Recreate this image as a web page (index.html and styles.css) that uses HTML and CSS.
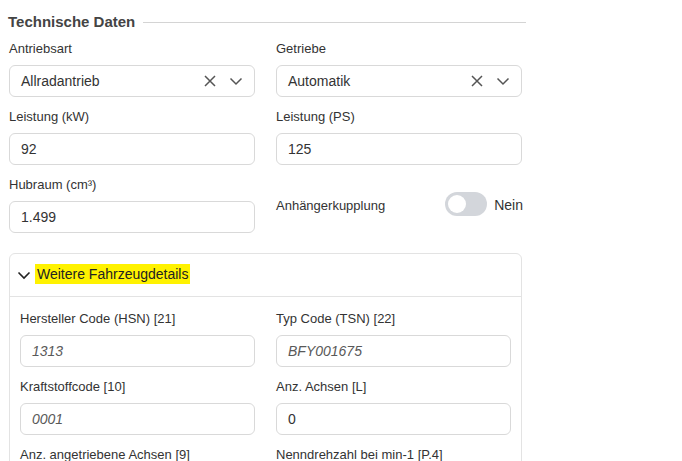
FILE: index.html
```html
<!DOCTYPE html>
<html lang="de">
<head>
<meta charset="utf-8">
<title>Technische Daten</title>
<link rel="stylesheet" href="styles.css">
</head>
<body>
<div class="page">
  <div class="section-title">
    <h2>Technische Daten</h2>
    <span class="rule"></span>
  </div>
  <div class="grid">
    <div class="field">
      <label>Antriebsart</label>
      <div class="select">
        <span class="value">Allradantrieb</span>
        <svg class="ico" width="14" height="14" viewBox="0 0 14 14"><path d="M2 2L12 12M12 2L2 12" stroke="#555" stroke-width="1.5" fill="none"/></svg>
        <svg class="ico chev" width="14" height="14" viewBox="0 0 14 14"><path d="M1.5 4.5L7 10L12.5 4.5" stroke="#555" stroke-width="1.5" fill="none"/></svg>
      </div>
    </div>
    <div class="field">
      <label>Getriebe</label>
      <div class="select">
        <span class="value">Automatik</span>
        <svg class="ico" width="14" height="14" viewBox="0 0 14 14"><path d="M2 2L12 12M12 2L2 12" stroke="#555" stroke-width="1.5" fill="none"/></svg>
        <svg class="ico chev" width="14" height="14" viewBox="0 0 14 14"><path d="M1.5 4.5L7 10L12.5 4.5" stroke="#555" stroke-width="1.5" fill="none"/></svg>
      </div>
    </div>
    <div class="field">
      <label>Leistung (kW)</label>
      <div class="input">92</div>
    </div>
    <div class="field">
      <label>Leistung (PS)</label>
      <div class="input">125</div>
    </div>
    <div class="field">
      <label>Hubraum (cm³)</label>
      <div class="input">1.499</div>
    </div>
    <div class="field switch-field">
      <span class="switch-label">Anhängerkupplung</span>
      <span class="toggle"><span class="knob"></span></span>
      <span class="switch-text">Nein</span>
    </div>
  </div>

  <div class="panel">
    <div class="panel-head">
      <svg width="14" height="14" viewBox="0 0 14 14"><path d="M1.5 4.5L7 10L12.5 4.5" stroke="#222" stroke-width="1.6" fill="none"/></svg>
      <mark>Weitere Fahrzeugdetails</mark>
    </div>
    <div class="panel-body grid">
      <div class="field">
        <label>Hersteller Code (HSN) [21]</label>
        <div class="input placeholder">1313</div>
      </div>
      <div class="field">
        <label>Typ Code (TSN) [22]</label>
        <div class="input placeholder">BFY001675</div>
      </div>
      <div class="field">
        <label>Kraftstoffcode [10]</label>
        <div class="input placeholder">0001</div>
      </div>
      <div class="field">
        <label>Anz. Achsen [L]</label>
        <div class="input">0</div>
      </div>
      <div class="field">
        <label>Anz. angetriebene Achsen [9]</label>
        <div class="input placeholder"></div>
      </div>
      <div class="field">
        <label>Nenndrehzahl bei min-1 [P.4]</label>
        <div class="input placeholder"></div>
      </div>
    </div>
  </div>
</div>
</body>
</html>
```
FILE: styles.css
```css
html, body {
  margin: 0;
  padding: 0;
  background: #fff;
}
body {
  font-family: "Liberation Sans", Arial, sans-serif;
  color: #333;
  overflow: hidden;
  height: 461px;
}
.page {
  width: 513px;
  padding: 13px 0 0 9px;
}
.section-title {
  display: flex;
  align-items: center;
  gap: 8px;
  margin-left: -1px;
  margin-bottom: 10px;
  width: 518px;
}
.section-title h2 {
  margin: 0;
  font-size: 15px;
  font-weight: bold;
  color: #444;
  line-height: 18px;
  white-space: nowrap;
}
.rule {
  flex: 1;
  height: 1px;
  background: #d4d4d4;
  margin-top: 1px;
}
.grid {
  display: grid;
  grid-template-columns: 1fr 1fr;
  column-gap: 21px;
  row-gap: 12px;
}
.field {
  display: flex;
  flex-direction: column;
}
.field label {
  font-size: 13px;
  line-height: 16px;
  margin-bottom: 8px;
  color: #333;
}
.input, .select {
  box-sizing: border-box;
  height: 32px;
  border: 1px solid #d9d9d9;
  border-radius: 6px;
  padding: 0 11px;
  font-size: 14px;
  line-height: 30px;
  color: #333;
  display: flex;
  align-items: center;
}
.placeholder {
  font-style: italic;
  color: #595959;
}
.select .value {
  flex: 1;
}
.select .ico {
  display: block;
  margin-left: 12px;
}
.switch-field {
  flex-direction: row;
  align-items: center;
}
.switch-label {
  flex: 1;
  font-size: 13px;
}
.toggle {
  width: 42px;
  height: 24px;
  border-radius: 12px;
  background: #d3d6db;
  position: relative;
  margin-right: 7px;
  margin-top: -2px;
}
.knob {
  position: absolute;
  left: 3px;
  top: 3px;
  width: 18px;
  height: 18px;
  border-radius: 50%;
  background: #fff;
}
.switch-text {
  font-size: 14px;
  margin-right: -1px;
}
.panel {
  margin-top: 20px;
  border: 1px solid #e3e3e3;
  border-radius: 6px;
}
.panel-head {
  height: 42px;
  display: flex;
  align-items: center;
  gap: 4px;
  padding-left: 7px;
  border-bottom: 1px solid #e3e3e3;
}
.panel-head svg {
  display: block;
}
mark {
  background: #fff200;
  color: #222;
  font-size: 14px;
  padding: 2px 2px;
  line-height: 16px;
  margin-top: -2px;
}
.panel-body {
  padding: 14px 10px 20px 10px;
}
```
